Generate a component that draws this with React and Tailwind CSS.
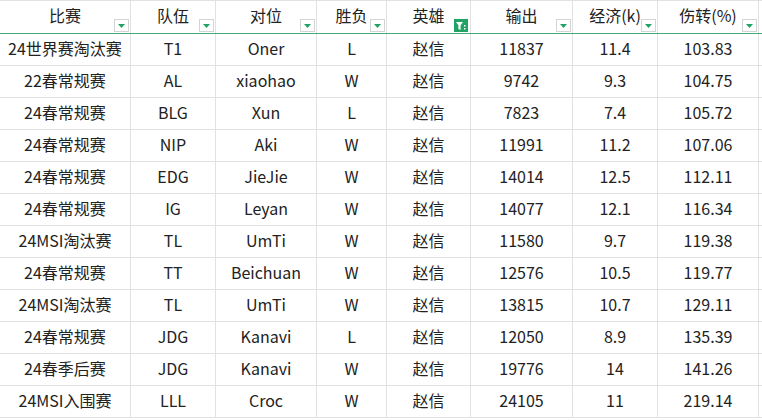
import React from "react";

const cols = ["比赛", "队伍", "对位", "胜负", "英雄", "输出", "经济(k)", "伤转(%)"];

const rows = [
  ["24世界赛淘汰赛", "T1", "Oner", "L", "赵信", "11837", "11.4", "103.83"],
  ["22春常规赛", "AL", "xiaohao", "W", "赵信", "9742", "9.3", "104.75"],
  ["24春常规赛", "BLG", "Xun", "L", "赵信", "7823", "7.4", "105.72"],
  ["24春常规赛", "NIP", "Aki", "W", "赵信", "11991", "11.2", "107.06"],
  ["24春常规赛", "EDG", "JieJie", "W", "赵信", "14014", "12.5", "112.11"],
  ["24春常规赛", "IG", "Leyan", "W", "赵信", "14077", "12.1", "116.34"],
  ["24MSI淘汰赛", "TL", "UmTi", "W", "赵信", "11580", "9.7", "119.38"],
  ["24春常规赛", "TT", "Beichuan", "W", "赵信", "12576", "10.5", "119.77"],
  ["24MSI淘汰赛", "TL", "UmTi", "W", "赵信", "13815", "10.7", "129.11"],
  ["24春常规赛", "JDG", "Kanavi", "L", "赵信", "12050", "8.9", "135.39"],
  ["24春季后赛", "JDG", "Kanavi", "W", "赵信", "19776", "14", "141.26"],
  ["24MSI入围赛", "LLL", "Croc", "W", "赵信", "24105", "11", "219.14"],
];

const grid = "grid grid-cols-[131px_85px_101px_70px_84px_102px_85px_101px]";

function FilterBtn({ active }) {
  if (active) {
    return (
      <span className="absolute right-[2px] bottom-[1px] w-[14px] h-[13px] bg-[#21a366] flex items-center justify-center">
        <svg width="12" height="10" viewBox="0 0 12 10">
          <path d="M1 1h7L5.6 4.2V9L3.4 8V4.2Z" fill="#fff" />
          <rect x="9" y="4" width="1.5" height="1.5" fill="#fff" />
          <rect x="9" y="7" width="1.5" height="1.5" fill="#fff" />
        </svg>
      </span>
    );
  }
  return (
    <span className="absolute right-[1px] bottom-[1px] w-[15px] h-[13px] border border-[#d4d4d4] bg-white flex items-center justify-center">
      <svg width="7" height="4" viewBox="0 0 7 4">
        <path d="M0 0h7L3.5 4Z" fill="#21a366" />
      </svg>
    </span>
  );
}

export default function App() {
  return (
    <div
      className="w-[762px] h-[420px] overflow-hidden bg-white text-[#222] text-[16px]"
      style={{ fontFamily: '"Noto Sans CJK SC", "Noto Sans", sans-serif' }}
    >
      {/* header */}
      <div className={`${grid} h-[34px] border-t border-b border-t-[#e2e2e2] border-b-[#43a87c]`}>
        {cols.map((c, i) => (
          <div key={c} className="relative flex items-center justify-center border-r border-[#e2e2e2] leading-none pb-[4px]">
            {c}
            <FilterBtn active={i === 4} />
          </div>
        ))}
      </div>

      {/* rows */}
      {rows.map((r, ri) => (
        <div key={ri} className={`${grid} h-[32px] border-b border-[#e2e2e2]`}>
          {r.map((v, ci) => (
            <div key={ci} className="flex items-center justify-center border-r border-[#e2e2e2] leading-none pb-[3px]">
              {v}
            </div>
          ))}
        </div>
      ))}
    </div>
  );
}
